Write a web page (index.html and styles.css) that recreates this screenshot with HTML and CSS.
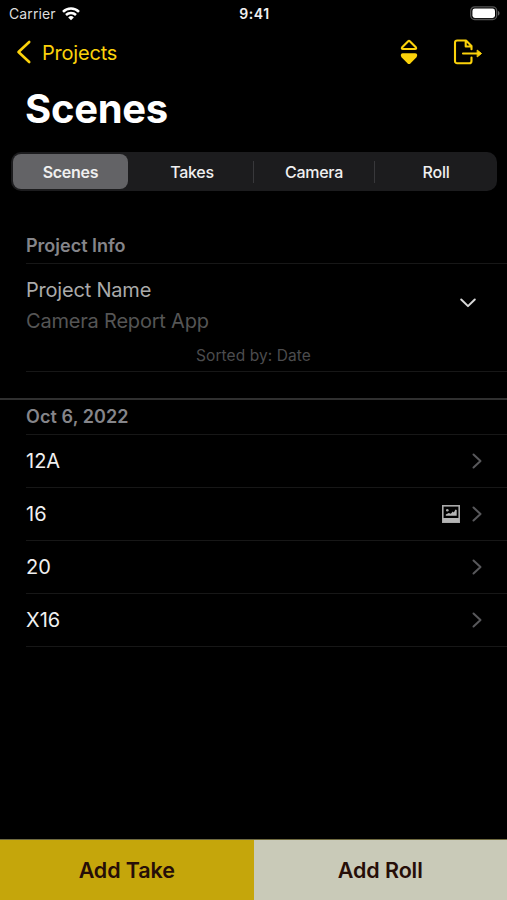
FILE: index.html
```html
<!DOCTYPE html>
<html lang="en">
<head>
<meta charset="utf-8">
<title>Scenes</title>
<link rel="stylesheet" href="styles.css">
</head>
<body>
<div class="app">
  <div class="status">
    <div class="carrier"><span class="carrier-name">Carrier</span>
      <svg width="18" height="14" viewBox="0 0 18 14" fill="none" stroke="#fff" stroke-width="2.5"><path d="M1 4.800a11.400 11.400 0 0 1 16 0M4 8a7.100 7.100 0 0 1 10 0"/><path d="M9 13.200 6.200 10.400a4 4 0 0 1 5.600 0z" fill="#fff" stroke="none"/></svg>
    </div>
    <div class="time">9:41</div>
    <svg class="battery" width="30" height="15" viewBox="0 0 30 15"><rect x=".7" y=".9" width="26" height="12.6" rx="4" fill="none" stroke="#555" stroke-width="1.3"/><rect x="2.4" y="2.5" width="22.6" height="9.4" rx="2.4" fill="#fff"/><path d="M28 5v4.6c2-.7 2-3.900 0-4.600z" fill="#666"/></svg>
  </div>
  <nav class="nav">
    <a class="back"><svg width="16" height="26" viewBox="0 0 16 26" fill="none" stroke="#fbd20b" stroke-width="2.6" stroke-linecap="round" stroke-linejoin="round"><path d="M13.200 3 2.500 13l10.700 10"/></svg><span>Projects</span></a>
    <div class="actions">
      <svg width="18" height="26" viewBox="0 0 18 26" fill="none" stroke="#fbd20b" stroke-width="2.100" stroke-linejoin="round"><path d="M8.200 2.200 2.200 8.200q-1 1.800.8 1.800h12q1.800 0 .8-1.800l-6-6q-.8-.7-1.600 0z"/><path fill="#fbd20b" d="M8.200 23.600 2.200 17.400q-1-2.100.8-2.100h12q1.800 0 .8 2.100l-6 6.200q-.8.700-1.600 0z"/></svg>
      <svg width="30" height="26" viewBox="0 0 30 26" fill="none" stroke="#fbd20b" stroke-width="2.100" stroke-linecap="round" stroke-linejoin="round"><path d="M18.500 18.500v3.400q0 2.300-2.300 2.300H4.300Q2 24.200 2 21.900V3.800q0-2.300 2.300-2.300h8.700L18.500 7V10.300M12.700 1.700v5.800h5.600M10 14.500h16"/><path fill="#fbd20b" stroke-width="1" d="m24.500 11.300 4 3.200-4 3.200z"/></svg>
    </div>
  </nav>
  <h1 class="title">Scenes</h1>
  <div class="segments">
    <div class="segment selected">Scenes</div>
    <div class="segment takes">Takes</div>
    <div class="segment divided">Camera</div>
    <div class="segment divided">Roll</div>
  </div>
  <h2 class="heading info">Project Info</h2>
  <section class="project">
    <div class="project-row">
      <div class="labels"><div class="name">Project Name</div><div class="value">Camera Report App</div></div>
      <svg width="18" height="12" viewBox="0 0 18 12" fill="none" stroke="#d8d8d8" stroke-width="2" stroke-linecap="round" stroke-linejoin="round"><path d="m2.200 2.500 6.800 6.600 6.800-6.600"/></svg>
    </div>
    <div class="sorted"><span>Sorted by: Date</span></div>
  </section>
  <h2 class="heading date">Oct 6, 2022</h2>
  <div class="list">
    <div class="row"><span>12A</span><svg class="chev" viewBox="0 0 10 16"><path d="m1.500 1.500 7 6.500-7 6.500"/></svg></div>
    <div class="row"><span>16</span><svg class="photo" width="18" height="18" viewBox="0 0 18 18"><rect x=".8" y=".8" width="16.400" height="16.400" fill="none" stroke="#aaa" stroke-width="1.600"/><path d="M1 13h16v4H1zM3.800 10.700V9.400l3-1.300 2 .7 2-2.200 1 .8 1.700-3 1.200.600v5.700z" fill="#b5b5b5"/><circle cx="5.300" cy="5.200" r="1.300" fill="#aaa"/></svg><svg class="chev" viewBox="0 0 10 16"><path d="m1.500 1.500 7 6.500-7 6.500"/></svg></div>
    <div class="row"><span>20</span><svg class="chev" viewBox="0 0 10 16"><path d="m1.500 1.500 7 6.500-7 6.500"/></svg></div>
    <div class="row"><span>X16</span><svg class="chev" viewBox="0 0 10 16"><path d="m1.500 1.500 7 6.500-7 6.500"/></svg></div>
  </div>
  <footer class="footer">
    <div class="button take"><span>Add Take</span></div>
    <div class="button roll"><span>Add Roll</span></div>
  </footer>
</div>
</body>
</html>
```
FILE: styles.css
```css
* { box-sizing: border-box; }
body { margin: 0; background: #000; color: #f0f0f0; font-family: Inter, "Liberation Sans", sans-serif; }
svg { display: block; flex: none; }
.app { height: 900px; display: flex; flex-direction: column; overflow: hidden; }
.app > * { flex: none; }
.status { height: 27px; display: grid; grid-template-columns: 1fr auto 1fr; align-items: center; padding: 0 7px 0 9px; }
.carrier { display: flex; align-items: center; gap: 6px; font-size: 14px; color: #ddd; letter-spacing: .1px; }
.time { font-size: 14px; font-weight: 600; letter-spacing: .6px; }
.battery { justify-self: end; }
.nav { height: 50px; display: flex; align-items: center; justify-content: space-between; padding: 0 24px 0 16px; }
.back { display: flex; align-items: center; gap: 10px; font-size: 20px; color: #fbd20b; letter-spacing: -.2px; }
.back span { padding-top: 1px; }
.actions { display: flex; gap: 35px; }
.title { margin: 0; height: 75px; padding: 7px 25px 0; font-size: 40px; line-height: 50px; font-weight: 700; letter-spacing: -.3px; color: #fff; }
.segments { height: 39px; margin: 0 10px 0 11px; padding: 2px 0 2px 2px; display: grid; grid-template-columns: 115px 125px 121px 1fr; border-radius: 10px; background: #1c1c1e; }
.segment { display: flex; align-items: center; justify-content: center; font-size: 16px; font-weight: 500; letter-spacing: -.25px; }
.takes { padding-left: 3px; }
.selected { border-radius: 8px; background: #636366; font-weight: 600; }
.divided { padding-left: 1px; background: linear-gradient(#38383b, #38383b) left center / 1px 22px no-repeat; }
.heading { margin: 0; padding-left: 26px; font-size: 18px; line-height: 24px; font-weight: 600; color: #85858a; }
.info { height: 72px; padding-top: 43px; }
.project { height: 109px; margin-left: 26px; border-top: 1px solid #171717; border-bottom: 1px solid #171717; }
.project-row { display: flex; height: 75px; align-items: center; justify-content: space-between; padding: 2px 30px 0 0; font-size: 20px; line-height: 31px; letter-spacing: -.2px; }
.labels { padding-top: 7px; }
.name { color: #aaa; }
.value { color: #555; }
.sorted { font-size: 15.500px; line-height: 34px; color: #4c4c4e; text-align: center; padding-right: 26px; letter-spacing: .08px; }
.date { margin-top: 26px; height: 36px; border-top: 2px solid #303030; padding-top: 5px; letter-spacing: .1px; }
.list { margin-left: 26px; border-top: 1px solid #171717; }
.row { height: 53px; display: flex; align-items: center; border-bottom: 1px solid #171717; padding-right: 25px; font-size: 20px; }
.chev { width: 10px; height: 16px; margin-left: auto; fill: none; stroke: #58585b; stroke-width: 2; stroke-linecap: round; stroke-linejoin: round; }
.photo { margin-left: auto; }
.photo + .chev { margin-left: 12px; }
.footer { height: 61px; margin-top: auto; display: grid; grid-template-columns: 1fr 1fr; border-top: 1px solid #6f6a40; font-size: 21.500px; font-weight: 600; color: #260e08; letter-spacing: -.1px; }
.button { display: flex; align-items: center; justify-content: center; }
.take { background: #c5a60b; }
.roll { background: #c9cab8; }
```
